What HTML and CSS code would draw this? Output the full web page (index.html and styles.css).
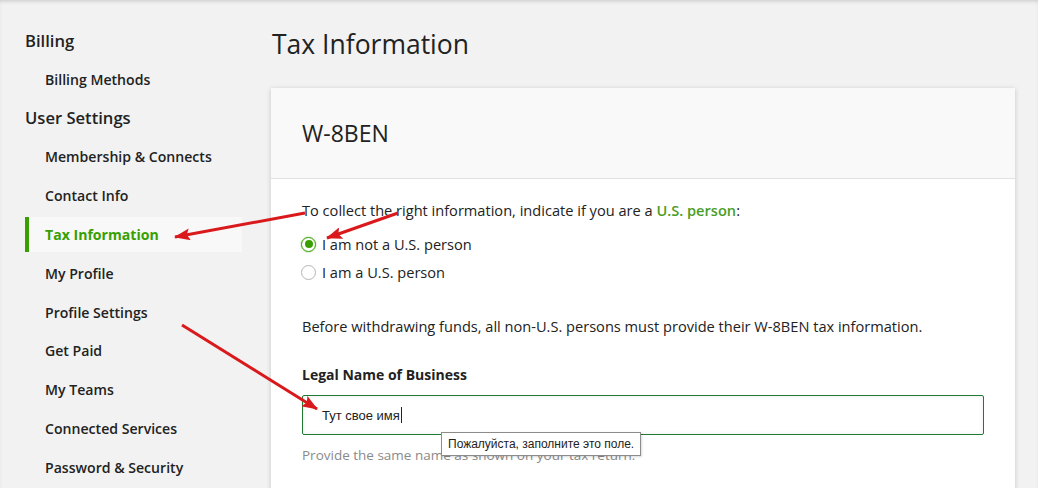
FILE: index.html
```html
<!DOCTYPE html>
<html lang="en">
<head>
    <meta charset="UTF-8">
    <meta name="viewport" content="width=device-width, initial-scale=1.0">
    <title>Tax Information</title>
    <link rel="stylesheet" href="styles.css">
</head>
<body>
    <div class="layout">
        <!-- Settings navigation -->
        <nav class="sidebar">
            <div class="nav-group">Billing</div>
            <a class="nav-item">Billing Methods</a>
            <div class="nav-group">User Settings</div>
            <a class="nav-item">Membership &amp; Connects</a>
            <a class="nav-item">Contact Info</a>
            <a class="nav-item active">Tax Information</a>
            <a class="nav-item">My Profile</a>
            <a class="nav-item">Profile Settings</a>
            <a class="nav-item">Get Paid</a>
            <a class="nav-item">My Teams</a>
            <a class="nav-item">Connected Services</a>
            <a class="nav-item">Password &amp; Security</a>
        </nav>

        <main class="main">
            <h1 class="page-title">Tax Information</h1>

            <section class="card">
                <div class="card-header">
                    <h2>W-8BEN</h2>
                </div>
                <div class="card-body">
                    <p class="intro">To collect the right information, indicate if you are a <a class="link">U.S. person</a>:</p>

                    <label class="radio-row">
                        <span class="radio checked"></span>
                        I am not a U.S. person
                    </label>
                    <label class="radio-row">
                        <span class="radio"></span>
                        I am a U.S. person
                    </label>

                    <p class="notice">Before withdrawing funds, all non-U.S. persons must provide their W-8BEN tax information.</p>

                    <div class="field">
                        <div class="field-label">Legal Name of Business</div>
                        <div class="input">Тут свое имя<span class="caret"></span></div>
                        <div class="tooltip">Пожалуйста, заполните это поле.</div>
                        <div class="help">Provide the same name as shown on your tax return.</div>
                    </div>
                </div>
            </section>
        </main>
    </div>

    <!-- Red annotation arrows drawn over the screenshot -->
    <svg class="arrows" width="1038" height="488" viewBox="0 0 1038 488">
        <defs>
            <marker id="head" markerUnits="userSpaceOnUse" markerWidth="16" markerHeight="12" refX="15" refY="6" orient="auto">
                <path d="M0,0 L16,6 L0,12 L3,6 Z" fill="#d9191c"/>
            </marker>
        </defs>
        <line x1="305" y1="213" x2="175" y2="237" stroke="#d9191c" stroke-width="3" marker-end="url(#head)"/>
        <line x1="398" y1="213" x2="327" y2="238" stroke="#d9191c" stroke-width="3" marker-end="url(#head)"/>
        <line x1="182" y1="325" x2="317" y2="409" stroke="#d9191c" stroke-width="3" marker-end="url(#head)"/>
    </svg>
</body>
</html>
```

FILE: styles.css
```css
body {
    margin: 0;
    font-family: "Open Sans", Arial, sans-serif;
    color: #222;
    background-color: #f2f2f2;
    box-shadow: inset 0 3px 4px -2px rgba(0, 0, 0, 0.18);
    height: 488px;
    overflow: hidden;
}
.layout {
    display: flex;
}

/* Sidebar */
.sidebar {
    width: 217px;
    padding: 21px 0 0 25px;
    display: flex;
    flex-direction: column;
}
.nav-group,
.nav-item {
    height: 38.8px;
    display: flex;
    align-items: center;
}
.nav-group {
    font-size: 16.6px;
    font-weight: 600;
}
.nav-item {
    padding-left: 20px;
    font-size: 14.1px;
    font-weight: 600;
    color: #222;
}
.nav-item.active {
    color: #37a000;
    font-weight: 700;
    padding-left: 16px;
    border-left: 4px solid #37a000;
    background-color: #f8f8f8;
    height: 35px;
    margin: 2px 0;
}

/* Main column */
.main {
    flex: 1;
    padding: 0 23px 0 29px;
}
.page-title {
    margin: 26px 0 0 1px;
    font-size: 26.5px;
    font-weight: 400;
    line-height: 36px;
}
.card {
    margin-top: 26px;
    background-color: #fff;
    box-shadow: 0 1px 5px rgba(0, 0, 0, 0.18);
    min-height: 420px;
}
.card-header {
    height: 90px;
    background-color: #f9f9f9;
    border-bottom: 1px solid #e2e2e2;
    display: flex;
    align-items: center;
    padding-left: 31px;
}
.card-header h2 {
    margin: 0;
    font-size: 23px;
    font-weight: 400;
}
.card-body {
    padding: 21px 31px 0 31px;
    font-size: 14.6px;
}
.intro {
    margin: 0;
    line-height: 20px;
}
.link {
    color: #4a9d26;
    font-weight: 600;
}
.radio-row {
    display: flex;
    align-items: center;
    gap: 6px;
    height: 28px;
    margin-left: -1px;
}
.radio-row:first-of-type {
    margin-top: 10px;
}
.radio {
    width: 15px;
    height: 15px;
    border: 1px solid #b5b5b5;
    border-radius: 50%;
    background-color: #fff;
    box-sizing: border-box;
    position: relative;
}
.radio.checked {
    border-color: #37a000;
    box-shadow: 0 0 2px rgba(55, 160, 0, 0.5);
}
.radio.checked::after {
    content: "";
    position: absolute;
    left: 2.5px;
    top: 2.5px;
    width: 8px;
    height: 8px;
    border-radius: 50%;
    background-color: #37a000;
}
.notice {
    margin: 30px 0 0 0;
    line-height: 20px;
}

/* Form field */
.field {
    position: relative;
    margin-top: 29px;
}
.field-label {
    font-size: 14px;
    font-weight: 700;
    line-height: 20px;
}
.input {
    margin-top: 10px;
    height: 38px;
    border: 1px solid #1f7a34;
    border-radius: 2px;
    box-shadow: inset 0 0 4px rgba(0, 0, 0, 0.08);
    display: flex;
    align-items: center;
    padding-left: 19px;
    font-family: Arial, "Liberation Sans", sans-serif;
    font-size: 13px;
}
.caret {
    width: 1px;
    height: 16px;
    background-color: #222;
    margin-left: 1px;
}
.help {
    margin-top: 10px;
    font-size: 13.5px;
    color: #8a8a8a;
    line-height: 20px;
}
.tooltip {
    position: absolute;
    left: 139px;
    top: 67px;
    padding: 3px 6px;
    background-color: #fff;
    border: 1px solid #8c8c8c;
    box-shadow: 1px 1px 2px rgba(0, 0, 0, 0.15);
    font-family: Arial, "Liberation Sans", sans-serif;
    font-size: 12px;
    line-height: 16px;
    color: #222;
    white-space: nowrap;
}

/* Annotations */
.arrows {
    position: absolute;
    left: 0;
    top: 0;
    pointer-events: none;
}
```
